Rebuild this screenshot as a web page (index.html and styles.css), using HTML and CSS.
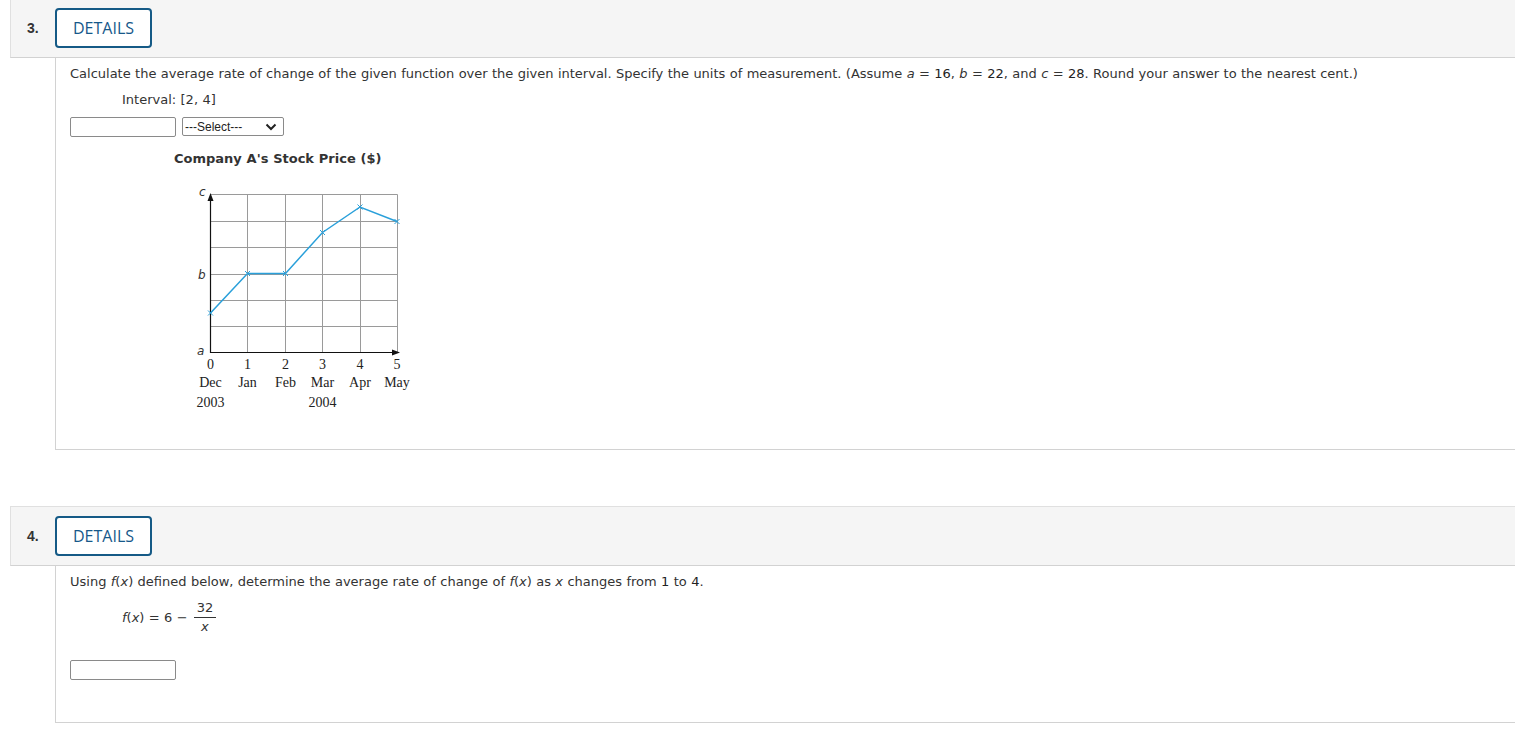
FILE: index.html
```html
<!DOCTYPE html>
<html>
<head>
<meta charset="utf-8">
<link rel="stylesheet" href="styles.css">
</head>
<body>
<div class="page">
  <div class="question q3">
    <div class="qhead">
      <span class="qnum">3.</span>
      <button class="details">DETAILS</button>
    </div>
    <div class="qbody">
      <p class="prompt">Calculate the average rate of change of the given function over the given interval. Specify the units of measurement. (Assume <i>a</i> = <span class="num">16</span>, <i>b</i> = <span class="num">22</span>, and <i>c</i> = <span class="num">28</span>. Round your answer to the nearest cent.)</p>
      <p class="indent">Interval: [2, 4]</p>
      <div class="answer-row">
        <span class="ansbox"></span>
        <span class="select">---Select---
          <svg class="chev" width="12" height="8" viewBox="0 0 12 8"><path d="M1.5 1.5 L6 6 L10.5 1.5" fill="none" stroke="#222" stroke-width="2"/></svg>
        </span>
      </div>
      <div class="figure">
        <div class="fig-title">Company A's Stock Price ($)</div>
        <svg class="chart" width="240" height="240" viewBox="180 180 240 240">
          <g stroke="#9a9a9a" stroke-width="1">
            <line x1="247.5" y1="193.5" x2="247.5" y2="352"/>
            <line x1="285.5" y1="193.5" x2="285.5" y2="352"/>
            <line x1="322.5" y1="193.5" x2="322.5" y2="352"/>
            <line x1="360.5" y1="193.5" x2="360.5" y2="352"/>
            <line x1="397.5" y1="193.5" x2="397.5" y2="352"/>
            <line x1="210" y1="193.5" x2="397.5" y2="193.5"/>
            <line x1="210" y1="220.5" x2="397.5" y2="220.5"/>
            <line x1="210" y1="246.5" x2="397.5" y2="246.5"/>
            <line x1="210" y1="273.5" x2="397.5" y2="273.5"/>
            <line x1="210" y1="299.5" x2="397.5" y2="299.5"/>
            <line x1="210" y1="325.5" x2="397.5" y2="325.5"/>
          </g>
          <g stroke="#111" stroke-width="1.2">
            <line x1="210.5" y1="352" x2="210.5" y2="196"/>
            <line x1="210" y1="351.5" x2="396" y2="351.5"/>
          </g>
          <path d="M210.5 192 L207.5 200 L213.5 200 Z" fill="#111"/>
          <path d="M400 351.5 L392 348.5 L392 354.5 Z" fill="#111"/>
          <polyline points="210.5,312 247.5,272.5 285.5,272.5 322.5,231.5 360,206 397,220.5" fill="none" stroke="#2aa0da" stroke-width="1.5"/>
          <g stroke="#2aa0da" stroke-width="1">
            <path d="M208 309.5 L213 314.5 M213 309.5 L208 314.5"/>
            <path d="M245 270 L250 275 M250 270 L245 275"/>
            <path d="M283 270 L288 275 M288 270 L283 275"/>
            <path d="M320 229 L325 234 M325 229 L320 234"/>
            <path d="M357.5 203.5 L362.5 208.5 M362.5 203.5 L357.5 208.5"/>
            <path d="M394.5 218 L399.5 223 M399.5 218 L394.5 223"/>
          </g>
          <g class="axlbl">
            <text x="199" y="195">c</text>
            <text x="198" y="278">b</text>
            <text x="197" y="354">a</text>
          </g>
          <g class="tm" text-anchor="middle">
            <text x="210.5" y="368">0</text>
            <text x="247.5" y="368">1</text>
            <text x="285.5" y="368">2</text>
            <text x="322.5" y="368">3</text>
            <text x="360" y="368">4</text>
            <text x="397" y="368">5</text>
            <text x="210.5" y="385.5">Dec</text>
            <text x="247.5" y="385.5">Jan</text>
            <text x="285.5" y="385.5">Feb</text>
            <text x="322.5" y="385.5">Mar</text>
            <text x="360" y="385.5">Apr</text>
            <text x="397" y="385.5">May</text>
            <text x="210.5" y="406">2003</text>
            <text x="322.5" y="406">2004</text>
          </g>
        </svg>
      </div>
    </div>
  </div>

  <div class="question q4">
    <div class="qhead">
      <span class="qnum">4.</span>
      <button class="details">DETAILS</button>
    </div>
    <div class="qbody">
      <p class="prompt">Using <i>f</i>(<i>x</i>) defined below, determine the average rate of change of <i>f</i>(<i>x</i>) as <i>x</i> changes from <span class="num">1</span> to <span class="num">4</span>.</p>
      <div class="formula indent">
        <span><i>f</i>(<i>x</i>) = 6 &minus;</span>
        <span class="frac"><span class="fnum">32</span><span class="fden"><i>x</i></span></span>
      </div>
      <div class="answer-row q4ans">
        <span class="ansbox"></span>
      </div>
    </div>
  </div>
</div>
</body>
</html>
```

FILE: styles.css
```css
html, body {
  margin: 0;
  padding: 0;
  background: #fff;
}
body {
  font-family: "DejaVu Sans", Verdana, sans-serif;
  font-size: 13px;
  word-spacing: 0.25px;
  color: #333;
  overflow: hidden;
}
.page {
  margin-top: -2px;
}
.question {
  margin-left: 10px;
}
.q4 {
  margin-top: 56px;
}
.qhead {
  display: flex;
  align-items: center;
  height: 58px;
  background: #f5f5f5;
  border: 1px solid #e0e0e0;
  border-right: none;
  border-bottom-color: #d2d2d2;
  word-spacing: 0;
}
.qnum {
  width: 44px;
  padding-left: 16px;
  box-sizing: border-box;
  font-family: "Liberation Sans", Arial, sans-serif;
  font-weight: bold;
  font-size: 14px;
  color: #333;
}
.details {
  width: 97px;
  height: 40px;
  box-sizing: border-box;
  border: 2px solid #155a86;
  border-radius: 4px;
  background: #fff;
  color: #16588a;
  font-family: "Open Sans", sans-serif;
  font-size: 16px;
  padding: 0;
  margin: 0;
}
.qbody {
  margin-left: 45px;
  border-left: 1px solid #d2d2d2;
  border-bottom: 1px solid #d2d2d2;
  padding: 8px 14px 0;
}
.q3 .qbody { height: 383px; }
.q4 .qbody { height: 148px; }
.prompt {
  margin: 0;
  line-height: 16px;
  white-space: nowrap;
}
.num { color: #222; }
.indent {
  margin: 0;
  padding-left: 52px;
}
p.indent {
  margin-top: 10px;
  line-height: 16px;
}
.answer-row {
  display: flex;
  align-items: flex-start;
  gap: 6px;
  margin-top: 9px;
}
.ansbox {
  display: block;
  width: 106px;
  height: 20px;
  box-sizing: border-box;
  border: 1px solid #8a8a8a;
  border-radius: 2px;
  background: #fff;
}
.select {
  display: flex;
  align-items: center;
  justify-content: space-between;
  width: 102px;
  height: 19px;
  box-sizing: border-box;
  border: 1px solid #8a8a8a;
  border-radius: 2px;
  padding: 0 6px 0 2px;
  font-family: "Liberation Sans", Arial, sans-serif;
  font-size: 12px;
  word-spacing: 0;
  color: #222;
}
.figure {
  margin-left: 104px;
  margin-top: 14px;
}
.fig-title {
  font-weight: bold;
  color: #333;
  line-height: 16px;
}
.chart {
  display: block;
  margin-top: 14px;
  margin-left: 6px;
}
.axlbl text {
  font-family: "DejaVu Sans", sans-serif;
  font-style: italic;
  font-size: 12px;
  fill: #333;
}
.tm text {
  font-family: "Liberation Serif", "Times New Roman", serif;
  font-size: 14px;
  fill: #222;
}
.formula {
  display: flex;
  align-items: center;
  gap: 6px;
  margin-top: 10px;
}
.frac {
  display: inline-flex;
  flex-direction: column;
  align-items: center;
}
.fnum {
  padding: 0 3px 2px;
  border-bottom: 1px solid #333;
  line-height: 15px;
}
.fden {
  line-height: 15px;
  padding-top: 1px;
}
.q4ans {
  margin-top: 26px;
}
```
